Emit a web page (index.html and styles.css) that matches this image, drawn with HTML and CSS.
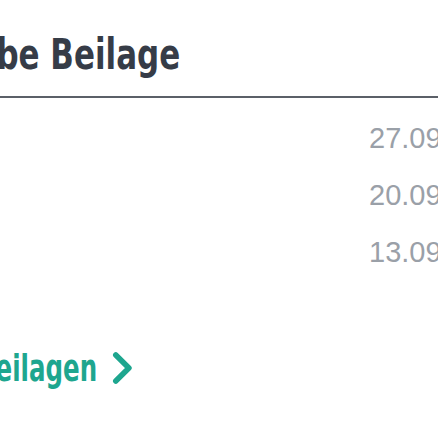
FILE: index.html
```html
<!DOCTYPE html>
<html lang="de">
<head>
<meta charset="utf-8">
<link rel="stylesheet" href="styles.css">
</head>
<body>
<div class="viewport">
  <section class="panel">
    <h2 class="title"><span class="title-text">Ausgabe Beilage</span></h2>
    <ul class="list">
      <li class="row"><span class="name">Beilage</span><span class="date">27.09.2024</span></li>
      <li class="row"><span class="name">Beilage</span><span class="date">20.09.2024</span></li>
      <li class="row"><span class="name">Beilage</span><span class="date">13.09.2024</span></li>
    </ul>
    <a class="more" href="#"><span class="more-text">Alle Beilagen</span><svg class="chev" width="31" height="34" viewBox="0 0 22 34" preserveAspectRatio="none"><path d="M4 4 L17 17 L4 30" fill="none" stroke="currentColor" stroke-width="5.5" stroke-linecap="round" stroke-linejoin="round"/></svg></a>
  </section>
</div>
</body>
</html>
```
FILE: styles.css
```css
html, body {
  margin: 0;
  padding: 0;
  background: #fff;
  overflow: hidden;
}
.viewport {
  width: 438px;
  height: 438px;
  overflow: hidden;
}
.panel {
  width: 1000px;
  padding-top: 28px;
}
.title {
  margin: 0;
  font-family: "DejaVu Sans Condensed", "DejaVu Sans", sans-serif;
  font-stretch: condensed;
  font-weight: 700;
  font-size: 43px;
  line-height: 52px;
  color: #363c47;
  padding-bottom: 16px;
  border-bottom: 2px solid #5b6068;
  white-space: nowrap;
}
.title-text {
  display: inline-block;
  margin-left: -111px;
  transform: scaleX(0.8);
  transform-origin: 0 50%;
}
.list {
  list-style: none;
  margin: 0;
  padding: 20px 0 0;
}
.row {
  display: flex;
  height: 57px;
  align-items: flex-start;
  font-family: "Liberation Sans", Arial, sans-serif;
}
.name {
  width: 369px;
  visibility: hidden;
}
.date {
  font-size: 29px;
  line-height: 40px;
  color: #9aa0a8;
}
.more {
  display: inline-flex;
  align-items: center;
  gap: 20px;
  margin-top: 57px;
  margin-left: -84px;
  transform: scaleX(0.717);
  transform-origin: 0 50%;
  font-family: "DejaVu Sans Condensed", "DejaVu Sans", sans-serif;
  font-stretch: condensed;
  font-weight: 700;
  font-size: 38px;
  color: #1ea68f;
  text-decoration: none;
  white-space: nowrap;
}
.chev {
  display: block;
}
```
